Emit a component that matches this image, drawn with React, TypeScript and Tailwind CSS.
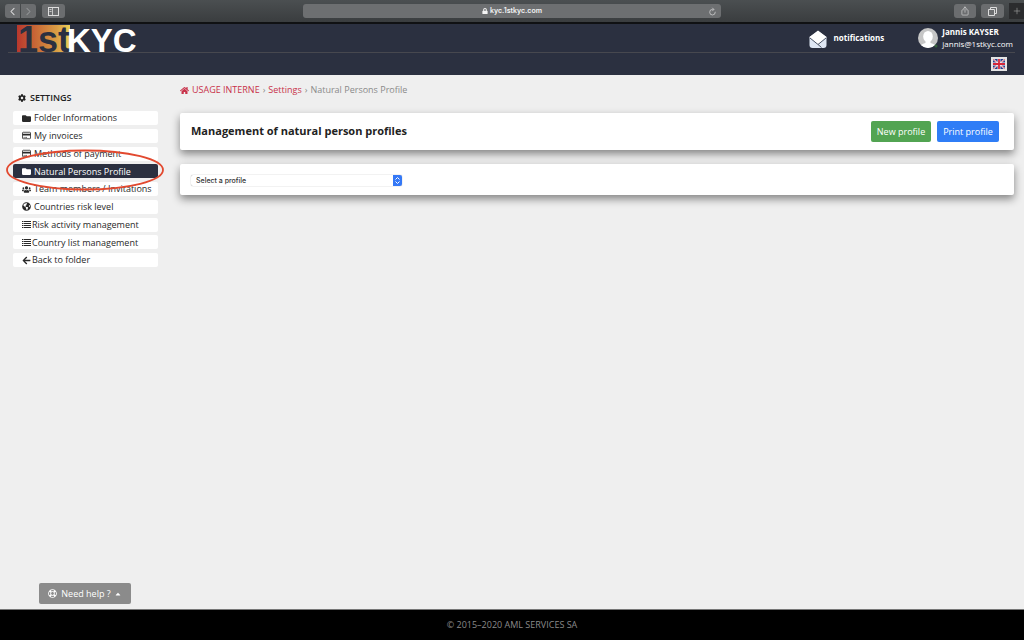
import { useState } from "react";
import type { ComponentType } from "react";
import {
  FaArrowLeft,
  FaCaretUp,
  FaCog,
  FaFolder,
  FaGlobeAmericas,
  FaHome,
  FaLock,
  FaRegLifeRing,
  FaUsers,
} from "react-icons/fa";
import { IoAddOutline, IoChevronBack, IoChevronForward, IoRefresh, IoShareOutline } from "react-icons/io5";

interface IconProps {
  size?: number | string;
  className?: string;
}

interface MenuItem {
  label: string;
  icon: ComponentType<IconProps>;
  tight?: boolean;
}

function CardIcon({ size = 9, className }: IconProps) {
  return (
    <svg width={size} height={size} viewBox="0 0 18 18" className={className}>
      <rect x="1" y="2.5" width="16" height="13" rx="1.500" fill="none" stroke="currentColor" strokeWidth="1.600" />
      <path d="M1 5.500h16v3.500H1z" fill="currentColor" />
      <path d="M3 12.800h2.500M6.500 12.800h3.500" stroke="currentColor" strokeWidth="1.400" />
    </svg>
  );
}

function ListIcon({ size = 9, className }: IconProps) {
  return (
    <svg width={size} height={size} viewBox="0 0 18 18" className={className} stroke="currentColor" strokeWidth="2.200">
      <path d="M0 3h3M0 7h3M0 11h3M0 15h3M4 3h14M4 7h14M4 11h14M4 15h14" />
    </svg>
  );
}

const menuItems: MenuItem[] = [
  { label: "Folder Informations", icon: FaFolder },
  { label: "My invoices", icon: CardIcon },
  { label: "Methods of payment", icon: CardIcon },
  { label: "Natural Persons Profile", icon: FaFolder },
  { label: "Team members / Invitations", icon: FaUsers },
  { label: "Countries risk level", icon: FaGlobeAmericas },
  { label: "Risk activity management", icon: ListIcon, tight: true },
  { label: "Country list management", icon: ListIcon, tight: true },
  { label: "Back to folder", icon: FaArrowLeft, tight: true },
];

function BrowserBar() {
  const button =
    "flex h-[14px] items-center justify-center bg-[#6b6d6f] text-[#dddddd]";

  return (
    <div className="flex h-6 items-center border-b-2 border-[#101113] bg-linear-to-b from-[#4b4f51] to-[#3a3d3f] pl-[5px]">
      <div className="flex flex-1 items-center">
        <button aria-label="Back" className={`${button} w-[15px] rounded-l-[3px]`}>
          <IoChevronBack size={11} />
        </button>
        <button aria-label="Forward" className={`${button} ml-px w-[15px] rounded-r-[3px]`}>
          <IoChevronForward size={11} className="text-[#929496]" />
        </button>
        <button aria-label="Sidebar" className={`${button} ml-[6px] w-[23px] rounded-[3px]`}>
          <svg width="11" height="9" viewBox="0 0 11 9" fill="none" stroke="currentColor">
            <rect x="0.5" y="0.5" width="10" height="8" />
            <path d="M4.5 0.5v8M1.5 2.5h2M1.5 4.5h2" strokeWidth="0.8" />
          </svg>
        </button>
      </div>
      <div className="mr-[5px] flex h-[14px] w-[41%] items-center rounded-[3px] bg-[#6d6f71] text-[#f4f4f4]">
        <span className="w-4" />
        <span className="flex flex-1 items-center justify-center gap-[2px] font-['Inter',sans-serif] text-[7px] font-semibold">
          <FaLock size={6} />
          kyc.1stkyc.com
        </span>
        <button aria-label="Reload" className="flex w-4 justify-center">
          <IoRefresh size={9} />
        </button>
      </div>
      <div className="flex flex-1 items-center justify-end">
        <button aria-label="Share" className={`${button} w-[22px] rounded-[3px]`}>
          <IoShareOutline size={10} />
        </button>
        <button aria-label="Show tabs" className={`${button} ml-[5px] w-[23px] rounded-[3px]`}>
          <svg width="9" height="9" viewBox="0 0 9 9" fill="none" stroke="currentColor">
            <path d="M0.5 2.500h6v6h-6zM2.500 2.500v-2h6v6h-2" />
          </svg>
        </button>
        <button
          aria-label="New tab"
          className="ml-[5px] flex h-4 w-[15px] items-center justify-center self-end bg-[#2b2c2e] text-[#a0a0a0]"
        >
          <IoAddOutline size={10} />
        </button>
      </div>
    </div>
  );
}

function Logo() {
  return (
    <svg
      width="122"
      height="29"
      viewBox="0 0 122 29"
      role="img"
      aria-label="1stKYC"
      className="overflow-visible"
    >
      <defs>
        <linearGradient id="logo-gradient">
          <stop offset="0" stopColor="#b8372d" />
          <stop offset="0.4" stopColor="#ca6f38" />
          <stop offset="0.75" stopColor="#da9d45" />
          <stop offset="1" stopColor="#ecd058" />
        </linearGradient>
      </defs>
      <rect x="1" y="1" width="53" height="27" fill="url(#logo-gradient)" />
      <g fontFamily="Liberation Sans, sans-serif" fontWeight="700">
        <text x="2" y="28" fontSize="36" fill="#2b3040">
          1st
        </text>
        <text x="51" y="28" fontSize="33" fill="#ffffff">
          KYC
        </text>
      </g>
    </svg>
  );
}

function Flag() {
  return (
    <svg width="12" height="10" viewBox="0 0 12 10">
      <rect width="12" height="10" fill="#263f8c" />
      <path d="M0 0l12 10M12 0L0 10" stroke="#fff" strokeWidth="1.500" />
      <path d="M0 0l12 10M12 0L0 10" stroke="#d3353f" strokeWidth="0.700" />
      <path d="M6 0v10M0 5h12" stroke="#fff" strokeWidth="2.800" />
      <path d="M6 0v10M0 5h12" stroke="#d3263a" strokeWidth="1.800" />
    </svg>
  );
}

function Header() {
  return (
    <header className="h-[51px] bg-[#2b3040] pr-[9px] pl-2 text-white">
      <div className="flex h-[29px] items-start justify-between border-b border-[#47484f] pl-2">
        <a href="#home">
          <Logo />
        </a>
        <div className="flex items-center pt-[2px]">
          <a href="#notifications" className="flex items-center gap-[7px] text-[8px] leading-[12px] font-bold">
            <svg width="18" height="19" viewBox="0 0 18 19" className="mt-[2px]">
              <path d="M0.500 7 9 1l8.500 6v8q0 3-3 3h-11q-3 0-3-3z" fill="#dfe7f4" />
              <path d="M0.500 7 9 0.500 17.500 7 9 15z" fill="#fff" />
              <path d="m1 8 8 6.500L17 8M9 14.500l3.500 3" fill="none" stroke="#4a5366" />
            </svg>
            notifications
          </a>
          <a href="#account" className="ml-[34px] flex items-center gap-1 pr-[2px] text-[8px]">
            <svg width="20" height="20" viewBox="0 0 20 20">
              <defs>
                <clipPath id="avatar">
                  <circle cx="10" cy="10" r="10" />
                </clipPath>
              </defs>
              <circle cx="10" cy="10" r="10" fill="#c6c6c6" />
              <g clipPath="url(#avatar)" fill="#fff">
                <ellipse cx="10" cy="8.500" rx="4.800" ry="5.500" />
                <path d="M7.500 12h5v3q5 1 6.500 5H1q1.500-4 6.500-5z" />
              </g>
              <circle cx="18" cy="18" r="1.500" fill="#35623c" />
            </svg>
            <span className="leading-[12px]">
              <strong className="block">Jannis KAYSER</strong>
              jannis@1stkyc.com
            </span>
          </a>
        </div>
      </div>
      <div className="flex justify-end pt-1 pr-2">
        <button aria-label="English" className="border-2 border-[#e4e4e4]">
          <Flag />
        </button>
      </div>
    </header>
  );
}

function Sidebar({ active, onSelect }: { active: string; onSelect: (label: string) => void }) {
  return (
    <aside className="flex w-[168px] shrink-0 flex-col pt-[15px] pl-[13px]">
      <h2 className="flex h-4 items-center gap-1 pl-[5px] text-[9px] font-semibold">
        <FaCog size={8} />
        SETTINGS
      </h2>
      <nav className="mt-[5px] mr-[10px]">
        <ul className="flex h-[156px] flex-col justify-between">
          {menuItems.map((item) => {
            const Icon = item.icon;
            const isActive = item.label === active;
            return (
              <li key={item.label} className="relative">
                <a
                  href="#settings"
                  onClick={() => onSelect(item.label)}
                  className={`flex h-[14px] items-center rounded-[2px] pl-[9px] text-[9px] whitespace-nowrap ${
                    item.tight ? "gap-px" : "gap-[3px]"
                  } ${isActive ? "bg-[#2b3040] text-white" : "bg-white text-[#292929]"}`}
                >
                  <Icon size={9} className="shrink-0" />
                  {item.label}
                </a>
                {isActive && (
                  <svg
                    className="pointer-events-none absolute -top-[16px] -left-[8px] z-10"
                    width="160"
                    height="44"
                    viewBox="0 0 160 44"
                  >
                    <ellipse cx="80" cy="22" rx="78" ry="19.500" fill="none" stroke="#e2492f" strokeWidth="1.800" />
                  </svg>
                )}
              </li>
            );
          })}
        </ul>
      </nav>
      <button className="mt-auto mb-[5px] ml-[26px] flex h-[21px] w-[92px] items-center justify-center rounded-[2px] bg-[#8b8b8b] text-[9px] text-white">
        <FaRegLifeRing size={9} />
        <span className="mr-[3px] ml-1">Need help ?</span>
        <FaCaretUp size={8} />
      </button>
    </aside>
  );
}

export default function App() {
  const [active, setActive] = useState("Natural Persons Profile");

  return (
    <div className="flex min-h-screen flex-col bg-[#efefef] font-['Open_Sans',sans-serif] text-[#222222]">
      <BrowserBar />
      <Header />
      <div className="flex flex-1">
        <Sidebar active={active} onSelect={setActive} />
        <main className="flex-1 pt-2 pr-[10px] pl-3">
          <nav className="flex h-[14px] items-center gap-[3px] text-[9px] text-[#8a8a8a]">
            <a href="#home" className="flex items-center gap-[3px] text-[#c8324a]">
              <FaHome size={9} />
              USAGE INTERNE
            </a>
            <span>›</span>
            <a href="#settings" className="text-[#c8324a]">
              Settings
            </a>
            <span>›</span>
            <span>Natural Persons Profile</span>
          </nav>

          <section className="mt-4 flex h-[37px] items-center rounded-[2px] bg-white pr-[15px] pl-[11px] shadow-[0_4px_8px_rgba(0,0,0,0.45)]">
            <h1 className="flex-1 text-[11px] font-bold">Management of natural person profiles</h1>
            <button className="h-[21px] w-[60px] rounded-[2px] bg-[#52a452] text-[9px] text-white">
              New profile
            </button>
            <button className="ml-[6px] h-[21px] w-[62px] rounded-[2px] bg-[#2f7df6] text-[9px] text-white">
              Print profile
            </button>
          </section>

          <section className="mt-[14px] flex h-[31px] items-center rounded-[2px] bg-white pt-[2px] pl-[11px] shadow-[0_4px_8px_rgba(0,0,0,0.45)]">
            <div className="relative">
              <select
                aria-label="Profile"
                defaultValue=""
                className="block h-[11px] w-[211px] appearance-none rounded-[2px] bg-white pl-[5px] font-['Inter',sans-serif] text-[7px] leading-[11px] font-medium text-[#333333] shadow-[0_0_1px_rgba(0,0,0,0.5)]"
              >
                <option value="">Select a profile</option>
              </select>
              <span className="pointer-events-none absolute top-0 right-0 flex h-[11px] w-[9px] items-center justify-center rounded-r-[2px] bg-[#3478f6]">
                <svg width="5" height="7" viewBox="0 0 5 7" fill="none" stroke="#fff">
                  <path d="M0.500 2.500l2-2 2 2M0.500 4.500l2 2 2-2" />
                </svg>
              </span>
            </div>
          </section>
        </main>
      </div>
      <footer className="flex h-[31px] items-center justify-center border-t border-[#777777] bg-black text-[9px] text-[#8a8a8a]">
        © 2015–2020 AML SERVICES SA
      </footer>
    </div>
  );
}
